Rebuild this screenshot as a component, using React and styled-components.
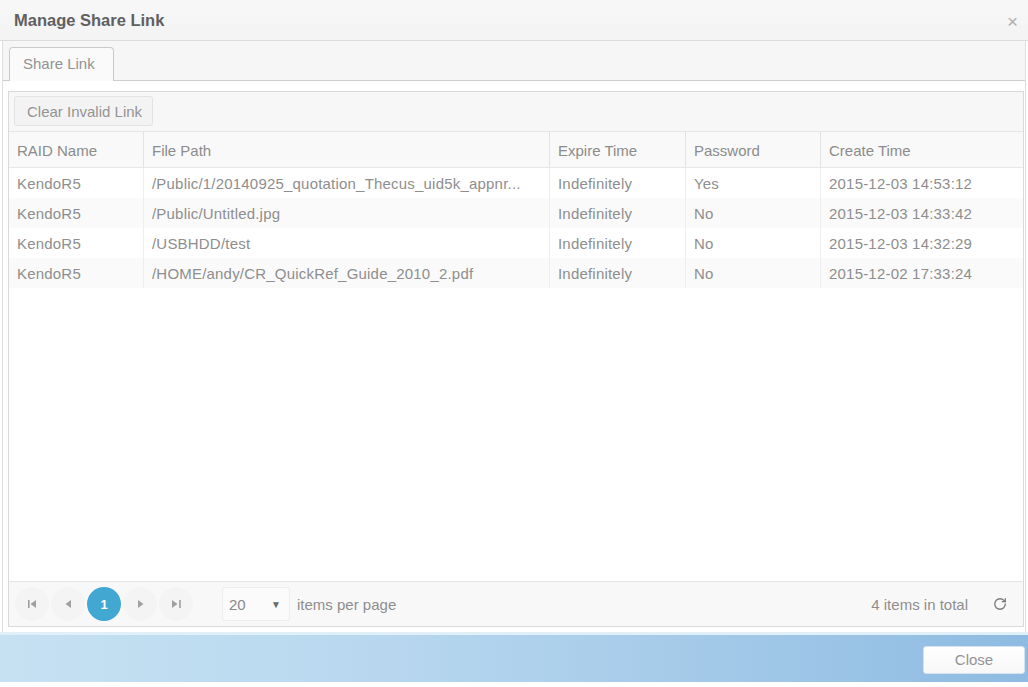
import React from "react";
import styled, { createGlobalStyle } from "styled-components";
import { RotateCw } from "lucide-react";

const Global = createGlobalStyle`
  html, body { margin: 0; padding: 0; background: #fff; }
  body { font-family: "Liberation Sans", Arial, Helvetica, sans-serif; }
  * { box-sizing: border-box; }
`;

const Dialog = styled.div`
  width: 1028px;
  height: 687px;
  display: flex;
  flex-direction: column;
  background: #fff;
  overflow: hidden;
`;

const TitleBar = styled.div`
  height: 41px;
  flex: none;
  display: flex;
  align-items: center;
  justify-content: space-between;
  padding: 0 10px 0 14px;
  background: linear-gradient(#f8f8f8, #f3f3f3);
  border-bottom: 1px solid #dcdcdc;
`;

const Title = styled.h1`
  margin: 0;
  font-size: 16.5px;
  font-weight: bold;
  color: #606060;
`;

const CloseX = styled.span`
  font-size: 19px;
  color: #b0b0b0;
  line-height: 1;
  margin-top: 2px;
`;

const Panel = styled.div`
  margin: 0 2px;
  height: 591px;
  flex: none;
  display: flex;
  flex-direction: column;
  border-left: 1px solid #dedede;
  border-right: 1px solid #dedede;
`;

const TabStrip = styled.div`
  height: 40px;
  flex: none;
  display: flex;
  align-items: flex-end;
  padding-left: 6px;
  background: #f6f6f6;
  border-bottom: 1px solid #cdcdcd;
`;

const Tab = styled.div`
  width: 105px;
  height: 34px;
  margin-bottom: -1px;
  padding: 7px 0 0 13px;
  border: 1px solid #c9c9c9;
  border-bottom: none;
  border-radius: 4px 4px 0 0;
  background: #fafafa;
  font-size: 15px;
  color: #939393;
`;

const TabPanel = styled.div`
  flex: 1;
  padding: 10px 1px 5px 5px;
  display: flex;
  flex-direction: column;
`;

const Grid = styled.div`
  flex: 1;
  display: flex;
  flex-direction: column;
  border: 1px solid #d9d9d9;
  background: #fff;
`;

const Toolbar = styled.div`
  height: 40px;
  flex: none;
  padding: 4px 5px;
  background: #f7f7f7;
  border-bottom: 1px solid #e6e6e6;
`;

const ToolButton = styled.button`
  height: 30px;
  padding: 0 10px 0 12px;
  border: 1px solid #e3e3e3;
  border-radius: 3px;
  background: #f3f3f3;
  font-family: inherit;
  font-size: 15px;
  color: #939393;
`;

const cols = "134px 406px 136px 135px 1fr";

const HeaderRow = styled.div`
  display: grid;
  grid-template-columns: ${cols};
  height: 36px;
  flex: none;
  background: #f9f9f9;
  border-bottom: 1px solid #e8e8e8;
`;

const HeaderCell = styled.div`
  display: flex;
  align-items: center;
  padding: 2px 8px 0;
  font-size: 15px;
  color: #8c8c8c;
  border-left: ${(p) => (p.$first ? "none" : "1px solid #e3e3e3")};
`;

const Row = styled.div`
  display: grid;
  grid-template-columns: ${cols};
  height: 30px;
  flex: none;
  background: ${(p) => (p.$alt ? "#fafafa" : "#fff")};
`;

const Cell = styled.div`
  display: flex;
  align-items: center;
  padding: 0 8px;
  font-size: 15px;
  letter-spacing: 0.2px;
  color: #8e8e8e;
  white-space: nowrap;
  overflow: hidden;
  border-left: ${(p) => (p.$first ? "none" : "1px solid #eeeeee")};
`;

const Filler = styled.div`
  flex: 1;
`;

const Pager = styled.div`
  height: 45px;
  flex: none;
  display: flex;
  align-items: center;
  padding: 0 16px 0 6px;
  background: #f8f8f8;
  border-top: 1px solid #e4e4e4;
`;

const PagerNav = styled.div`
  display: flex;
  align-items: center;
  gap: 2px;
`;

const NavButton = styled.div`
  width: 34px;
  height: 34px;
  border-radius: 50%;
  display: flex;
  align-items: center;
  justify-content: center;
  background: ${(p) => (p.$active ? "#42a8d1" : "#f4f4f4")};
  color: #fff;
  font-size: 13px;
  font-weight: bold;
`;

const PageSize = styled.div`
  width: 68px;
  height: 34px;
  margin-left: 29px;
  display: flex;
  align-items: center;
  justify-content: space-between;
  padding: 0 8px 0 6px;
  border: 1px solid #ededed;
  border-radius: 3px;
  background: #fbfbfb;
  font-size: 15px;
  color: #888;
`;

const Caret = styled.span`
  font-size: 10px;
  color: #6a6a6a;
`;

const PagerText = styled.span`
  font-size: 15px;
  color: #8e8e8e;
  margin-left: ${(p) => p.$ml || "0"};
`;

const Spacer = styled.div`
  flex: 1;
`;

const Refresh = styled.span`
  display: flex;
  margin-left: 25px;
  color: #777;
`;

const Footer = styled.div`
  height: 50px;
  flex: none;
  display: flex;
  align-items: center;
  justify-content: flex-end;
  padding-right: 3px;
  background: linear-gradient(90deg, #c6e1f2 0%, #b9d8ef 35%, #a6cbe9 65%, #8ebbe2 100%);
  border-top: 3px solid #e0eff8;
`;

const CloseButton = styled.button`
  width: 102px;
  height: 28px;
  margin-top: 2px;
  border: 1px solid #d6e3ee;
  border-radius: 3px;
  background: linear-gradient(#ffffff, #f7f7f7);
  font-family: inherit;
  font-size: 15px;
  color: #939393;
`;

const Icon = ({ kind }) => {
  const c = "#a0a0a0";
  if (kind === "first")
    return (
      <svg width="9" height="8" viewBox="0 0 9 8">
        <rect x="0" y="0" width="1.6" height="8" fill={c} />
        <polygon points="8,0 8,8 2.5,4" fill={c} />
      </svg>
    );
  if (kind === "prev")
    return (
      <svg width="7" height="8" viewBox="0 0 7 8">
        <polygon points="6,0 6,8 0.5,4" fill={c} />
      </svg>
    );
  if (kind === "next")
    return (
      <svg width="7" height="8" viewBox="0 0 7 8">
        <polygon points="1,0 1,8 6.5,4" fill={c} />
      </svg>
    );
  return (
    <svg width="9" height="8" viewBox="0 0 9 8">
      <polygon points="0,0 0,8 5.5,4" fill={c} />
      <rect x="7.2" y="0" width="1.6" height="8" fill={c} />
    </svg>
  );
};

const headers = ["RAID Name", "File Path", "Expire Time", "Password", "Create Time"];

const rows = [
  ["KendoR5", "/Public/1/20140925_quotation_Thecus_uid5k_appnr...", "Indefinitely", "Yes", "2015-12-03 14:53:12"],
  ["KendoR5", "/Public/Untitled.jpg", "Indefinitely", "No", "2015-12-03 14:33:42"],
  ["KendoR5", "/USBHDD/test", "Indefinitely", "No", "2015-12-03 14:32:29"],
  ["KendoR5", "/HOME/andy/CR_QuickRef_Guide_2010_2.pdf", "Indefinitely", "No", "2015-12-02 17:33:24"],
];

export default function App() {
  return (
    <>
      <Global />
      <Dialog>
        <TitleBar>
          <Title>Manage Share Link</Title>
          <CloseX>×</CloseX>
        </TitleBar>
        <Panel>
          <TabStrip>
            <Tab>Share Link</Tab>
          </TabStrip>
          <TabPanel>
            <Grid>
              <Toolbar>
                <ToolButton>Clear Invalid Link</ToolButton>
              </Toolbar>
              <HeaderRow>
                {headers.map((h, i) => (
                  <HeaderCell key={h} $first={i === 0}>
                    {h}
                  </HeaderCell>
                ))}
              </HeaderRow>
              {rows.map((r, ri) => (
                <Row key={ri} $alt={ri % 2 === 1}>
                  {r.map((c, ci) => (
                    <Cell key={ci} $first={ci === 0}>
                      {c}
                    </Cell>
                  ))}
                </Row>
              ))}
              <Filler />
              <Pager>
                <PagerNav>
                  <NavButton><Icon kind="first" /></NavButton>
                  <NavButton><Icon kind="prev" /></NavButton>
                  <NavButton $active>1</NavButton>
                  <NavButton><Icon kind="next" /></NavButton>
                  <NavButton><Icon kind="last" /></NavButton>
                </PagerNav>
                <PageSize>
                  <span>20</span>
                  <Caret>▼</Caret>
                </PageSize>
                <PagerText $ml="7px">items per page</PagerText>
                <Spacer />
                <PagerText>4 items in total</PagerText>
                <Refresh>
                  <RotateCw size={14} strokeWidth={2.2} />
                </Refresh>
              </Pager>
            </Grid>
          </TabPanel>
        </Panel>
        <Footer>
          <CloseButton>Close</CloseButton>
        </Footer>
      </Dialog>
    </>
  );
}
